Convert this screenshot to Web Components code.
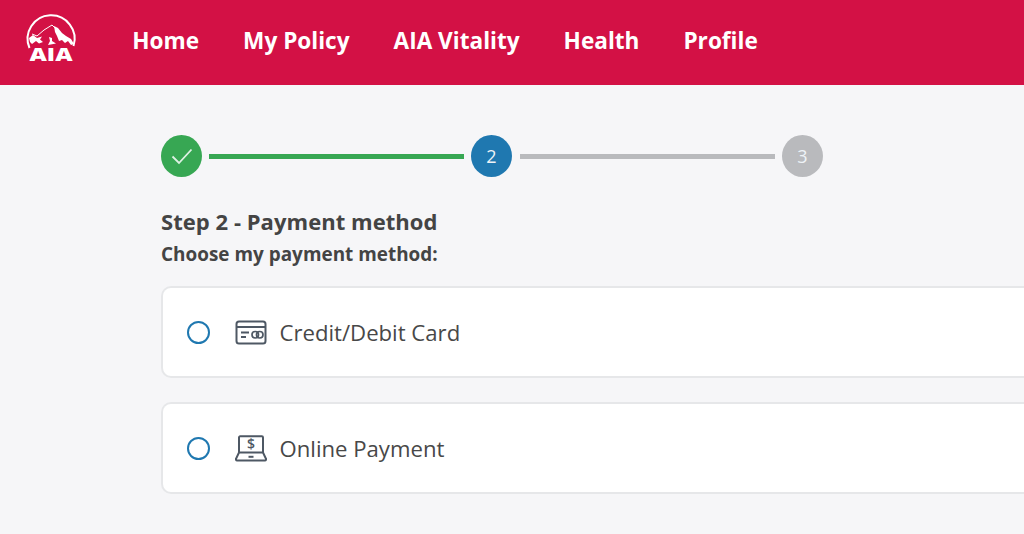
<!DOCTYPE html>
<html lang="en"><head><meta charset="utf-8"><title>Payment method</title>
<style>
html,body{margin:0;padding:0;background:#f6f6f8;width:1024px;height:534px;overflow:hidden;font-family:"Open Sans",sans-serif;color:#414141}
</style></head>
<body>
<aia-header></aia-header>
<aia-page>
  <aia-stepper></aia-stepper>
  <aia-heading title="Step 2 - Payment method" sub="Choose my payment method:"></aia-heading>
  <aia-option kind="card">Credit/Debit Card</aia-option>
  <aia-option kind="online">Online Payment</aia-option>
</aia-page>
<script>
function def(name,html){customElements.define(name,class extends HTMLElement{
  connectedCallback(){if(this.shadowRoot)return;const s=this.attachShadow({mode:'open'});s.innerHTML=typeof html==='function'?html(this):html;}
});}
def('aia-header',`<style>
:host{display:flex;align-items:center;height:85px;background:#d31145;box-sizing:border-box;padding-left:22px;color:#fff}
svg{display:block;width:60px;height:60px;flex:none;margin-top:-3px}
nav{display:flex;gap:44px;margin-left:50.3px;font:700 22.6px/1 "Open Sans",sans-serif;margin-top:-3px}
</style>
<svg viewBox="22 11 60 60" aria-label="AIA logo">
  <path d="M29.5 48A23.5 23.5 0 1 1 73.5 46" fill="none" stroke="#fff" stroke-width="2"/>
  <path fill="none" stroke="#fff" stroke-width="1" d="M32 34L37 36L44 30L52 25L55 28"/>
  <path fill="#fff" d="M54 26L58 28L62 33L66 36L71 39L74 44L71 45L68 41L65 43L62 40L59 41L57 36L55 32z"/>
  <path fill="#fff" d="M29 38L33 35L37 38L42 36.5L40 39.5L43 42L39 43.5L36 41L32 44L30 42z"/>
  <path fill="#fff" d="M49 37L52 38L52 41L56 43.5L48 45L50 41z"/>
  <text x="51" y="60.5" text-anchor="middle" font-family="Open Sans" font-weight="800" font-size="17" fill="#fff" textLength="43" lengthAdjust="spacingAndGlyphs">AIA</text>
</svg>
<nav><span>Home</span><span>My Policy</span><span>AIA Vitality</span><span>Health</span><span>Profile</span></nav>`);
def('aia-page',`<style>
:host{display:block;padding:50px 0 0 161px;width:1024px;box-sizing:border-box}
</style><slot></slot>`);
def('aia-stepper',`<style>
:host{display:flex;align-items:center;height:42px;width:662px}
.c{width:41px;height:42px;border-radius:50%;display:flex;align-items:center;justify-content:center;color:#eef3f7;font:400 18px/1 "Open Sans",sans-serif;flex:none}
.l{width:255px;height:5px;margin:0 7px;flex:none;background:#b9babd}
.l.two{margin-left:8px}
.g{background:#37a753}.b{background:#1f78b0}.n{background:#b9babd}
</style>
<div class="c g"><svg width="24" height="18" viewBox="0 0 24 18"><path d="M2.5 9.5l6.5 6.5L21.5 2.5" fill="none" stroke="#dff1e4" stroke-width="1.8"/></svg></div>
<div class="l g"></div><div class="c b">2</div><div class="l two"></div><div class="c n">3</div>`);
def('aia-heading',e=>`<style>
:host{display:block;margin-top:30px;font-family:"Open Sans",sans-serif;font-weight:700;color:#444}
h2{margin:0;font-size:22px;line-height:28px;font-weight:700;letter-spacing:.04px}
p{margin:7px 0 0;font-size:18.9px;line-height:24px;letter-spacing:.02px}
</style><h2>${e.getAttribute('title')}</h2><p>${e.getAttribute('sub')}</p>`);
const icons={card:`<svg width="32" height="25" viewBox="0 0 32 25" fill="none" stroke="#4e5864" stroke-width="2"><rect x="1.5" y="1.5" width="29" height="22" rx="2.5"/><path d="M1.5 7h29M6 12.5h8M6 17h5"/><rect x="17" y="11.5" width="6.5" height="6.5" rx="3.2" stroke-width="1.7"/><rect x="21.5" y="11.5" width="6.5" height="6.5" rx="3.2" stroke-width="1.7"/></svg>`,
online:`<svg width="32" height="27" viewBox="0 0 32 27" fill="none" stroke="#4e5864" stroke-width="2"><path d="M4 17.5V2.5a1.2 1.2 0 0 1 1.2-1.2h21.6a1.2 1.2 0 0 1 1.2 1.2v15"/><path d="M4 17.5h24l2.8 6a1.2 1.2 0 0 1-1 2H2.2a1.2 1.2 0 0 1-1-2z"/><path d="M13.5 21.8h5"/><text x="16" y="14" text-anchor="middle" font-family="Open Sans" font-size="14" font-weight="600" fill="#4e5864" stroke="none">$</text></svg>`};
def('aia-option',e=>`<style>
:host{display:flex;align-items:center;box-sizing:border-box;height:92px;margin-top:24px;background:#fff;border:2px solid #e6e7e9;border-right:0;border-radius:10px 0 0 10px;padding:1px 0 0 24px;font:400 22.15px/1 "Open Sans",sans-serif;color:#484848}
:host(:first-of-type){margin-top:20px}
.r{width:23px;height:23px;box-sizing:border-box;border:2.5px solid #1f78b0;border-radius:50%;flex:none}
.i{width:32px;margin-left:25px;margin-right:12.5px;display:flex;flex:none}
</style><span class="r"></span><span class="i">${icons[e.getAttribute('kind')]}</span><slot></slot>`);
</script>
</body></html>
